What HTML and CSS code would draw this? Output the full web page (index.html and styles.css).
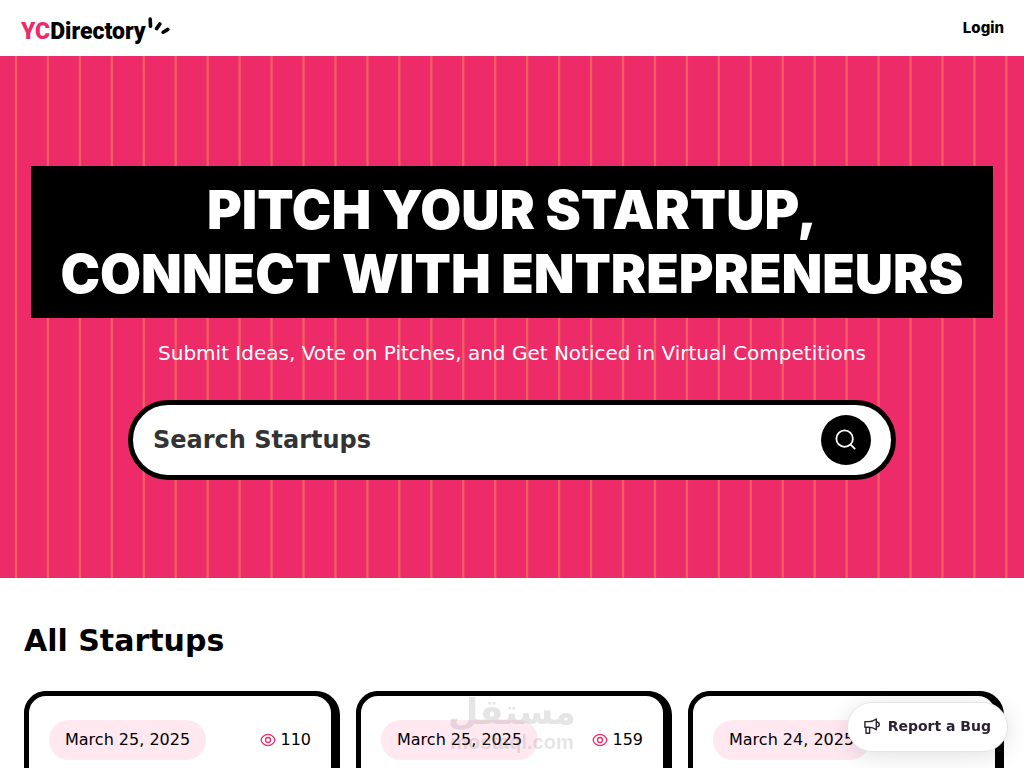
FILE: index.html
```html
<!DOCTYPE html>
<html lang="en">
<head>
<meta charset="utf-8">
<meta name="viewport" content="width=device-width, initial-scale=1">
<title>YC Directory</title>
<link rel="stylesheet" href="styles.css">
</head>
<body>
<header class="navbar">
  <a class="logo" href="#"><span class="logo-name"><span class="logo-accent">YC</span>Directory</span><svg class="logo-spark" viewBox="0 0 24 20" aria-hidden="true"><path d="M4.200 3 4.500 10.200M13.800 8 10.600 12.600M21.800 13.400 17.200 16.200"/></svg></a>
  <button class="login" type="button">Login</button>
</header>
<main>
  <section class="hero">
    <h1 class="hero-title">Pitch your startup,<br>connect with entrepreneurs</h1>
    <p class="hero-text">Submit Ideas, Vote on Pitches, and Get Noticed in Virtual Competitions</p>
    <form class="search">
      <input class="search-input" type="text" name="query" placeholder="Search Startups" aria-label="Search Startups">
      <button class="search-button" type="submit" aria-label="Search">
        <svg class="search-icon" viewBox="0 0 24 24" aria-hidden="true"><circle cx="10.500" cy="10.500" r="9"/><path d="m17 17 5 5"/></svg>
      </button>
    </form>
  </section>
  <section class="startups">
    <h2 class="startups-title">All Startups</h2>
    <ul class="card-grid">
      <li class="card">
        <div class="card-head">
          <p class="date">March 25, 2025</p>
          <p class="views"><svg class="eye" viewBox="0 0 16 16" aria-hidden="true"><path d="M1.200 8C1.200 5.400 4.600 2.400 8 2.400S14.800 5.400 14.800 8 11.400 13.600 8 13.600 1.200 10.600 1.200 8Z"/><circle cx="8" cy="8" r="2.500"/></svg>110</p>
        </div>
      </li>
      <li class="card">
        <div class="card-head">
          <p class="date">March 25, 2025</p>
          <p class="views"><svg class="eye" viewBox="0 0 16 16" aria-hidden="true"><path d="M1.200 8C1.200 5.400 4.600 2.400 8 2.400S14.800 5.400 14.800 8 11.400 13.600 8 13.600 1.200 10.600 1.200 8Z"/><circle cx="8" cy="8" r="2.500"/></svg>159</p>
        </div>
      </li>
      <li class="card">
        <div class="card-head">
          <p class="date">March 24, 2025</p>
        </div>
      </li>
    </ul>
  </section>
</main>
<div class="watermark">
  <span class="watermark-name" lang="ar" dir="rtl">مستقل</span>
  <span class="watermark-site">mostaql.com</span>
</div>
<button class="report" type="button">
  <svg class="megaphone" viewBox="0 0 16 16" aria-hidden="true"><path d="M.9 3.600H5c2.600 0 5-.8 7.300-2.600v10.800C10 10 7.600 9.200 5 9.200H.9ZM2 9.200v6h3.600v-6M12.300 3.800c2.200.4 3 1.400 3 2.600s-.8 2.200-3 2.600"/></svg>
  Report a Bug
</button>
</body>
</html>
```
FILE: styles.css
```css
* {
  box-sizing: border-box;
  margin: 0;
}

body {
  background: #fff;
  color: #000;
  font: 16px/24px "DejaVu Sans", sans-serif;
}

button,
input {
  font: inherit;
  border: 0;
}

.navbar {
  display: flex;
  align-items: center;
  justify-content: space-between;
  height: 56px;
  padding: 0 20px;
}

.logo {
  display: flex;
  align-items: center;
  padding: 3px 1px 0;
  color: #000;
  text-decoration: none;
}

.logo-name {
  padding-top: 4px;
  font: 900 23px/28px Roboto, sans-serif;
}

.logo-accent {
  color: #ee2b69;
}

.logo-spark {
  width: 24px;
  height: 20px;
  margin-bottom: 8px;
  fill: none;
  stroke: #000;
  stroke-width: 3.6;
  stroke-linecap: round;
}

.login {
  padding: 0;
  background: none;
  font: 800 15px/24px Inter, sans-serif;
}

.hero {
  display: flex;
  flex-direction: column;
  align-items: center;
  padding: 110px 24px 98px;
  background: repeating-linear-gradient(to right, #fbe84300 0 1.4%, #fbe84348 1.5% 1.62%, #fbe84300 1.72% 3.12%) #ee2b69;
  color: #fff;
  text-align: center;
}

.hero-title {
  width: 100%;
  max-width: 962px;
  padding: 12px 0;
  background: #000;
  font: 900 53px/64px Inter, sans-serif;
  text-transform: uppercase;
}

.hero-text {
  margin-top: 20px;
  font-size: 20px;
  line-height: 30px;
}

.search {
  display: flex;
  align-items: center;
  gap: 20px;
  width: 100%;
  max-width: 768px;
  height: 80px;
  margin-top: 32px;
  padding: 0 20px;
  border: 5px solid #000;
  border-radius: 80px;
  background: #fff;
}

.search-input {
  flex: 1;
  min-width: 0;
  padding: 0;
  background: none;
  font-size: 24px;
  font-weight: 700;
  outline: none;
}

.search-input::placeholder {
  color: #333;
}

.search-button {
  display: flex;
  align-items: center;
  justify-content: center;
  width: 50px;
  height: 50px;
  padding: 0;
  border-radius: 50%;
  background: #000;
}

.search-icon {
  width: 22px;
  height: 22px;
  fill: none;
  stroke: #fff;
  stroke-width: 2;
}

.startups {
  padding: 40px 24px;
}

.startups-title {
  font-size: 30px;
  line-height: 45px;
}

.card-grid {
  display: grid;
  grid-template-columns: repeat(3, 1fr);
  gap: 20px;
  margin-top: 28px;
  padding: 0;
  list-style: none;
}

.card {
  min-height: 400px;
  padding: 24px 20px;
  border: 5px solid #000;
  border-radius: 22px;
  background: #fff;
  box-shadow: 2px 2px 0 2px #000;
}

.card-head {
  display: flex;
  align-items: center;
  justify-content: space-between;
}

.date {
  padding: 8px 16px;
  border-radius: 40px;
  background: #ffe8f0;
}

.views {
  display: flex;
  align-items: center;
  gap: 4px;
}

.eye {
  width: 16px;
  height: 16px;
  fill: none;
  stroke: #ee2b69;
  stroke-width: 1.3;
}

.watermark {
  position: fixed;
  bottom: 14px;
  left: 0;
  right: 0;
  display: flex;
  flex-direction: column;
  align-items: center;
  color: #888;
  font-weight: 700;
  opacity: 0.22;
  pointer-events: none;
}

.watermark-name {
  font-size: 35px;
  line-height: 36px;
}

.watermark-site {
  font: 700 20px/24px "Liberation Sans", sans-serif;
}

.report {
  position: fixed;
  right: 16px;
  bottom: 16px;
  display: flex;
  align-items: center;
  gap: 8px;
  height: 50px;
  padding: 0 16px 2px;
  border: 1px solid #e5e3e8;
  border-radius: 25px;
  background: #fff;
  box-shadow: 0 4px 24px #0000001f;
  color: #2b2233;
  font-size: 14px;
  font-weight: 700;
}

.megaphone {
  width: 16px;
  height: 16px;
  fill: none;
  stroke: #2b2233;
  stroke-width: 1.4;
  stroke-linejoin: round;
}
```
